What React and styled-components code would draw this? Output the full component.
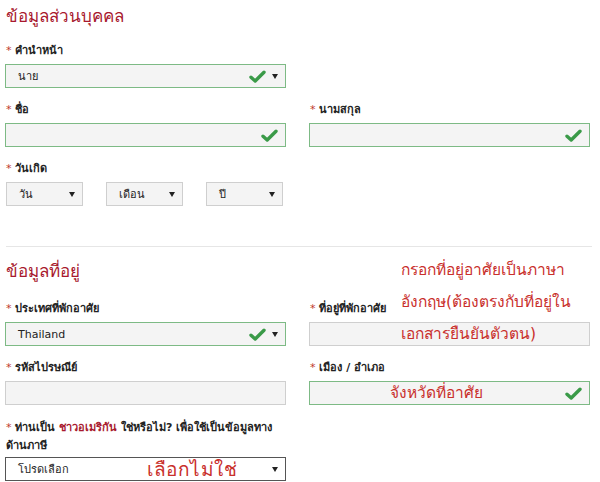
import styled, { createGlobalStyle } from 'styled-components';

const GlobalStyle = createGlobalStyle`
  body {
    margin: 0;
    background: #fff;
    font-family: Tahoma, "DejaVu Sans", "Noto Sans", sans-serif;
  }
`;

function CheckIcon() {
  return (
    <svg width="17" height="13" viewBox="0 0 17 13">
      <path
        d="M2 7.2 L6.2 11 L15 2.2"
        fill="none"
        stroke="#3a9a48"
        strokeWidth="3.4"
        strokeLinecap="round"
        strokeLinejoin="round"
      />
    </svg>
  );
}

function Label({ children }) {
  return (
    <FieldLabel>
      <Star>*</Star> {children}
    </FieldLabel>
  );
}

function SelectBox({ value, ok, width, plain, note, noteLeft }) {
  return (
    <Box $ok={ok} $plain={plain} $width={width}>
      <BoxText>{value}</BoxText>
      {note && <InlineNote $left={noteLeft} $big>{note}</InlineNote>}
      <BoxIcons>
        {ok && <CheckIcon />}
        <Arrow />
      </BoxIcons>
    </Box>
  );
}

function TextBox({ ok, note, noteLeft }) {
  return (
    <Box $ok={ok}>
      <BoxText />
      {note && <InlineNote $left={noteLeft}>{note}</InlineNote>}
      <BoxIcons>{ok && <CheckIcon />}</BoxIcons>
    </Box>
  );
}

export default function App() {
  return (
    <>
      <GlobalStyle />
      <Page>
        <SectionTitle>ข้อมูลส่วนบุคคล</SectionTitle>
        <FormGrid>
          <Field>
            <Label>คำนำหน้า</Label>
            <SelectBox value="นาย" ok />
          </Field>
          <div />
          <Field>
            <Label>ชื่อ</Label>
            <TextBox ok />
          </Field>
          <Field>
            <Label>นามสกุล</Label>
            <TextBox ok />
          </Field>
          <Field>
            <Label>วันเกิด</Label>
            <DateRow>
              <SelectBox value="วัน" width={77} />
              <SelectBox value="เดือน" width={77} />
              <SelectBox value="ปี" width={77} />
            </DateRow>
          </Field>
        </FormGrid>

        <Divider />

        <SectionTitle $second>ข้อมูลที่อยู่</SectionTitle>
        <FormGrid>
          <Field>
            <Label>ประเทศที่พักอาศัย</Label>
            <SelectBox value="Thailand" ok />
          </Field>
          <Field>
            <Label>ที่อยู่ที่พักอาศัย</Label>
            <TextBox />
          </Field>
          <Field>
            <Label>รหัสไปรษณีย์</Label>
            <TextBox />
          </Field>
          <Field>
            <Label>เมือง / อำเภอ</Label>
            <TextBox ok note="จังหวัดที่อาศัย" noteLeft={80} />
          </Field>
          <Field>
            <QuestionLabel>
              <Star>*</Star> ท่านเป็น <Em>ชาวอเมริกัน</Em> ใช่หรือไม่?
              เพื่อใช้เป็นข้อมูลทางด้านภาษี
            </QuestionLabel>
            <SelectBox value="โปรดเลือก" plain note="เลือกไม่ใช่" noteLeft={141} />
          </Field>
        </FormGrid>

        <AddressNote>
          กรอกที่อยู่อาศัยเป็นภาษา
          <br />
          อังกฤษ(ต้องตรงกับที่อยู่ใน
          <br />
          เอกสารยืนยันตัวตน)
        </AddressNote>
      </Page>
    </>
  );
}

const Page = styled.div`
  position: relative;
  width: 600px;
  height: 482px;
  box-sizing: border-box;
  padding: 0 0 0 5px;
  overflow: hidden;
`;

const SectionTitle = styled.h2`
  margin: ${p => (p.$second ? '13px 0 19px 1px' : '5px 0 16px 1px')};
  font-size: 17px;
  line-height: 22px;
  font-weight: normal;
  color: #a8192e;
`;

const FormGrid = styled.div`
  display: grid;
  grid-template-columns: 281px 281px;
  column-gap: 23px;
  row-gap: 14px;
  align-items: start;
`;

const Field = styled.div`
  display: flex;
  flex-direction: column;
`;

const FieldLabel = styled.div`
  font-size: 11px;
  line-height: 16px;
  font-weight: bold;
  color: #222;
  margin: 0 0 5px 1px;
  white-space: nowrap;
`;

const QuestionLabel = styled.div`
  font-size: 11px;
  line-height: 18px;
  font-weight: bold;
  color: #222;
  margin: 0 0 2px 1px;
`;

const Star = styled.span`
  color: #c0392b;
  font-weight: normal;
`;

const Em = styled.span`
  color: #a8192e;
`;

const Box = styled.div`
  position: relative;
  display: flex;
  align-items: center;
  box-sizing: border-box;
  width: ${p => (p.$width ? `${p.$width}px` : '100%')};
  height: 24px;
  padding: 0 7px 0 12px;
  border: 1px solid
    ${p => (p.$ok ? '#7dba85' : p.$plain ? '#555' : '#cfcfcf')};
  background: ${p => (p.$plain ? '#fff' : '#f4f4f4')};
  font-size: 11px;
  color: #222;
`;

const BoxText = styled.span`
  flex: 1;
`;

const BoxIcons = styled.span`
  display: flex;
  align-items: center;
  gap: 6px;
`;

const Arrow = styled.span`
  width: 0;
  height: 0;
  border-left: 3px solid transparent;
  border-right: 3px solid transparent;
  border-top: 5px solid #222;
`;

const DateRow = styled.div`
  display: flex;
  gap: 23px;
  padding-left: 1px;
`;

const Divider = styled.hr`
  width: 586px;
  margin: 40px 0 0 1px;
  border: none;
  border-top: 1px solid #e6e6e6;
`;

const noteFont = `
  font-family: Tahoma, "DejaVu Sans", "Noto Sans", sans-serif;
  color: #c9302c;
  font-weight: normal;
  white-space: nowrap;
`;

const InlineNote = styled.span`
  ${noteFont}
  position: absolute;
  left: ${p => p.$left}px;
  top: 0;
  font-size: ${p => (p.$big ? '19px' : '15.5px')};
  line-height: 22px;
  letter-spacing: ${p => (p.$big ? '0.5px' : '0')};
`;

const AddressNote = styled.div`
  ${noteFont}
  position: absolute;
  left: 401px;
  top: 254px;
  font-size: 15.5px;
  line-height: 32px;
`;
